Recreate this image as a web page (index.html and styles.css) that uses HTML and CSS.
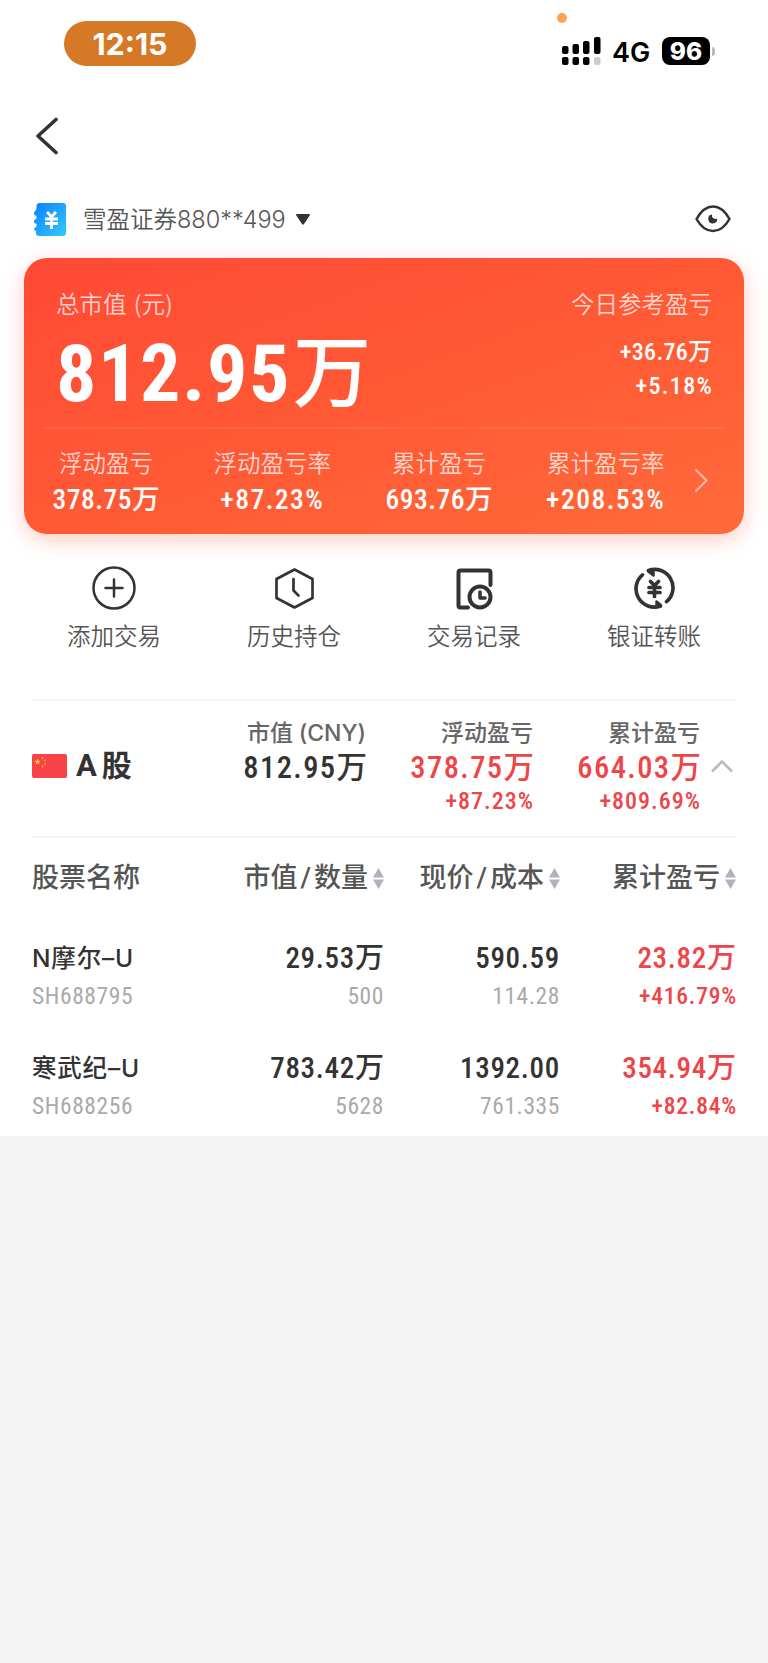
FILE: index.html
```
<!DOCTYPE html>
<html lang="zh-CN">
<head>
    <meta charset="UTF-8">
    <meta name="viewport" content="width=device-width, initial-scale=1.0">
    <title>持仓盈亏</title>
    <link rel="stylesheet" href="styles.css">
</head>
<body>
    <main class="page">
        <header class="status-bar">
            <span class="clock">12:15</span>
            <div class="status-right">
                <span class="mic-dot"></span>
                <svg class="signal" width="39" height="28" viewBox="0 0 39 28">
                    <rect x="0" y="9" width="6.5" height="8" rx="2"/>
                    <rect x="10.5" y="7" width="6.5" height="10" rx="2"/>
                    <rect x="21" y="4" width="6.5" height="13" rx="2"/>
                    <rect x="32" y="0" width="6.5" height="17" rx="2"/>
                    <rect x="0" y="20" width="6.5" height="8" rx="2"/>
                    <rect x="10.5" y="20" width="6.5" height="8" rx="2"/>
                    <rect x="21" y="20" width="6.5" height="8" rx="2"/>
                    <rect x="32" y="20" width="6.5" height="8" rx="2" fill="#ccc"/>
                </svg>
                <span class="network">4G</span>
                <span class="battery">96</span>
                <span class="battery-tip"></span>
            </div>
        </header>

        <nav class="nav-bar">
            <svg width="24" height="38" viewBox="0 0 24 38" fill="none" stroke="#333" stroke-width="3.6" stroke-linecap="round" stroke-linejoin="round">
                <path d="M21 2.5 3 19l18 16.5"/>
            </svg>
        </nav>

        <section class="account">
            <svg class="account-icon" width="32" height="33" viewBox="0 0 32 33">
                <defs>
                    <linearGradient id="blue" x1="0" y1="0" x2="1" y2="1">
                        <stop offset="0" stop-color="#0a80ff"/>
                        <stop offset="1" stop-color="#35c8ff"/>
                    </linearGradient>
                </defs>
                <path fill="url(#blue)" d="M5 0h24a3 3 0 0 1 3 3v27a3 3 0 0 1-3 3H5a3 3 0 0 1-3-3v-2a2 2 0 0 1-1.500-3l2-1.500v-2.500l-2-1a2 2 0 0 1 0-3l2-1.500v-2.500l-2-1a2 2 0 0 1 0-3L2.500 6V3A3 3 0 0 1 5 0z"/>
                <path fill="none" stroke="#fff" stroke-width="2.800" stroke-linecap="square" d="m14 10 3.500 4L21 10M17.500 14v10.500M12.500 16h10M12.500 20.500h10"/>
            </svg>
            <span class="account-name">雪盈证券880**499</span>
            <svg class="account-arrow" width="14" height="11" viewBox="0 0 14 11"><path fill="#333" d="M1 0h12q1.500.3.500 1.800L8 10q-1 1.300-2 0L.5 1.800Q-.5.3 1 0z"/></svg>
            <svg class="eye" width="36" height="28" viewBox="0 0 36 28">
                <path fill="none" stroke="#333" stroke-width="2.500" stroke-linejoin="round" d="M1.500 14C6 6 11 1.500 18 1.500S30 6 34.500 14C30 22 25 26 18 26S6 22 1.500 14z"/>
                <path fill="#333" d="M17 9.500q-.8 4.500 5.300 4.500a4.500 4.500 0 1 1-5.300-4.500z"/>
            </svg>
        </section>

        <section class="card">
            <div class="card-top">
                <div>
                    <div class="card-label">总市值 (元)</div>
                    <div class="total">812.95<span class="wan">万</span></div>
                </div>
                <div class="today">
                    <div class="card-label">今日参考盈亏</div>
                    <div class="today-value">+36.76<span class="wan">万</span></div>
                    <div class="today-value percent">+5.18%</div>
                </div>
            </div>
            <div class="card-bottom">
                <div class="stat">
                    <div class="card-label">浮动盈亏</div>
                    <div class="stat-value">378.75<span class="wan">万</span></div>
                </div>
                <div class="stat">
                    <div class="card-label">浮动盈亏率</div>
                    <div class="stat-value percent">+87.23%</div>
                </div>
                <div class="stat">
                    <div class="card-label">累计盈亏</div>
                    <div class="stat-value">693.76<span class="wan">万</span></div>
                </div>
                <div class="stat">
                    <div class="card-label">累计盈亏率</div>
                    <div class="stat-value percent">+208.53%</div>
                </div>
                <svg class="card-more" width="15" height="25" viewBox="0 0 15 25" fill="none" stroke="#ffb49f" stroke-width="2.400" stroke-linejoin="round">
                    <path d="m1.500 1.500 11 11-11 11"/>
                </svg>
            </div>
        </section>

        <section class="actions">
            <div class="action">
                <svg width="44" height="44" viewBox="0 0 44 44" fill="none" stroke="#333" stroke-width="2.500" stroke-linecap="round">
                    <circle cx="22" cy="22" r="20.500"/>
                    <path d="M22 13.500v17M13.500 22h17"/>
                </svg>
                <span>添加交易</span>
            </div>
            <div class="action">
                <svg width="44" height="44" viewBox="0 0 44 44" fill="none" stroke="#333" stroke-width="2.700" stroke-linecap="round" stroke-linejoin="round">
                    <path d="m22.500 3.500 18 9.500v19l-18 9.500-18-9.500V13z"/>
                    <path d="M21.500 13v11.500l5 5"/>
                </svg>
                <span>历史持仓</span>
            </div>
            <div class="action">
                <svg width="44" height="44" viewBox="0 0 44 44" fill="none" stroke="#333" stroke-width="4" stroke-linecap="round" stroke-linejoin="round">
                    <path d="M38.500 19V6.500a2 2 0 0 0-2-2h-28a2 2 0 0 0-2 2v33a2 2 0 0 0 2 2H16"/>
                    <circle cx="28" cy="31" r="10.500"/>
                    <path stroke-width="3.500" d="M28 26v6h5"/>
                </svg>
                <span>交易记录</span>
            </div>
            <div class="action">
                <svg width="44" height="44" viewBox="0 0 44 44" fill="none" stroke="#333" stroke-width="3.600" stroke-linecap="round" stroke-linejoin="round">
                    <path d="M10.500 8.800A18.300 18.300 0 0 0 28.500 40M34.500 35.700A18.300 18.300 0 0 0 16.500 4.500"/>
                    <path fill="#333" stroke-width="2.500" d="M16 5.200 21.500 9.500V6zM29 39.300 24.500 35.500v3.500z"/>
                    <path stroke-width="3.700" d="m18.500 15.500 4 4 4-4M22.500 20v10.500M17 21.500h11M17 26.500h11"/>
                </svg>
                <span>银证转账</span>
            </div>
        </section>

        <section class="market">
            <div class="market-name">
                <svg width="35" height="24" viewBox="0 0 35 24">
                    <rect width="35" height="24" rx="2" fill="#f94248"/>
                    <path fill="#ffde2e" d="m5.500 4.500.8 2.300h2.400l-1.900 1.400.7 2.300-2-1.400-2 1.400.7-2.300-1.900-1.400h2.400z"/>
                    <g fill="#ffb12e">
                        <circle cx="10.500" cy="4" r=".9"/>
                        <circle cx="13" cy="6.500" r=".9"/>
                        <circle cx="13" cy="10" r=".9"/>
                        <circle cx="10.500" cy="12.500" r=".9"/>
                    </g>
                </svg>
                <strong>A<span>股</span></strong>
            </div>
            <div class="market-col">
                <div class="market-label">市值 <span class="currency">(CNY)</span></div>
                <div class="market-value">812.95<span class="wan">万</span></div>
            </div>
            <div class="market-col">
                <div class="market-label">浮动盈亏</div>
                <div class="market-value up">378.75<span class="wan">万</span></div>
                <div class="market-rate up">+87.23%</div>
            </div>
            <div class="market-col">
                <div class="market-label">累计盈亏</div>
                <div class="market-value up">664.03<span class="wan">万</span></div>
                <div class="market-rate up">+809.69%</div>
            </div>
            <svg class="collapse" width="22" height="14" viewBox="0 0 22 14" fill="none" stroke="#bbb" stroke-width="2.600">
                <path d="m1 12.500 10-10 10 10"/>
            </svg>
        </section>

        <section class="stocks">
            <div class="stock-row stock-head">
                <div>股票名称</div>
                <div>市值<i>/</i>数量<svg class="sort" width="11" height="21" viewBox="0 0 11 21"><path d="M5.500 0 11 9.500H0zM0 11.500h11L5.500 21z"/></svg></div>
                <div>现价<i>/</i>成本<svg class="sort" width="11" height="21" viewBox="0 0 11 21"><path d="M5.500 0 11 9.500H0zM0 11.500h11L5.500 21z"/></svg></div>
                <div>累计盈亏<svg class="sort" width="11" height="21" viewBox="0 0 11 21"><path d="M5.500 0 11 9.500H0zM0 11.500h11L5.500 21z"/></svg></div>
            </div>
            <div class="stock-row">
                <div>
                    <div class="stock-name">N摩尔–U</div>
                    <div class="sub">SH688795</div>
                </div>
                <div>
                    <div class="value">29.53<span class="wan">万</span></div>
                    <div class="sub">500</div>
                </div>
                <div>
                    <div class="value">590.59</div>
                    <div class="sub">114.28</div>
                </div>
                <div class="up">
                    <div class="value">23.82<span class="wan">万</span></div>
                    <div class="sub rate">+416.79%</div>
                </div>
            </div>
            <div class="stock-row">
                <div>
                    <div class="stock-name">寒武纪–U</div>
                    <div class="sub">SH688256</div>
                </div>
                <div>
                    <div class="value">783.42<span class="wan">万</span></div>
                    <div class="sub">5628</div>
                </div>
                <div>
                    <div class="value">1392.00</div>
                    <div class="sub">761.335</div>
                </div>
                <div class="up">
                    <div class="value">354.94<span class="wan">万</span></div>
                    <div class="sub rate">+82.84%</div>
                </div>
            </div>
        </section>
    </main>
</body>
</html>
```
FILE: styles.css
```
* {
    box-sizing: border-box;
}
body {
    margin: 0;
    min-height: 1663px;
    background-color: #f4f4f4;
    color: #333;
    font-family: Roboto, "Noto Sans CJK SC", sans-serif;
}
svg {
    display: block;
    flex: none;
}
.page {
    height: 1136px;
    background-color: #fff;
    overflow: hidden;
}
.wan {
    font-family: "Noto Sans CJK SC", sans-serif;
    letter-spacing: 0;
    line-height: 1px;
}
.up {
    color: #ee4548;
}
.total, .today-value, .stat-value, .market-value, .market-rate, .value, .sub {
    font-stretch: 85%;
}

/* status bar */
.status-bar {
    display: flex;
    justify-content: space-between;
    height: 100px;
    padding: 21px 53px 0 64px;
    font-family: Inter, sans-serif;
}
.clock {
    width: 132px;
    height: 45px;
    border-radius: 23px;
    background-color: #d67926;
    color: #fff;
    font-size: 30.5px;
    font-weight: 650;
    line-height: 46px;
    text-align: center;
}
.status-right {
    position: relative;
    display: flex;
    align-items: center;
    height: 28px;
    margin-top: 16px;
}
.mic-dot {
    position: absolute;
    top: -24px;
    left: -5px;
    width: 10px;
    height: 10px;
    border-radius: 50%;
    background-color: #ffa352;
}
.network {
    width: 38px;
    margin: 3px 12px 0 11px;
    color: #000;
    font-size: 27px;
    font-weight: 600;
    line-height: 28px;
}
.battery {
    width: 48px;
    height: 28px;
    border-radius: 8px;
    background-color: #000;
    color: #fff;
    font-size: 24.5px;
    font-weight: 800;
    line-height: 28px;
    text-align: center;
}
.battery-tip {
    width: 3px;
    height: 9px;
    margin-left: 2px;
    border-radius: 0 4px 4px 0;
    background-color: #bbb;
}

/* back and account */
.nav-bar {
    height: 102px;
    padding: 17px 35px;
}
.account {
    display: flex;
    align-items: center;
    height: 34px;
    padding: 1px 37px 0 34px;
}
.account-name {
    margin-left: 17px;
    color: #555;
    font-family: Inter, "Noto Sans CJK SC", sans-serif;
    font-size: 23.5px;
    font-weight: 350;
    line-height: 33px;
}
.account-arrow {
    margin-left: 10px;
}
.eye {
    margin: 0 0 2px auto;
}

/* summary card */
.card {
    height: 276px;
    margin: 22px 24px 0;
    padding: 29px 19px 0;
    border-radius: 23px;
    background: linear-gradient(160deg, #ff4a35, #ff5935 50%, #ff6a3a);
    box-shadow: 0 6px 20px rgba(255, 90, 60, 0.3);
    color: #fff;
}
.card-top {
    display: flex;
    justify-content: space-between;
    height: 142px;
    padding: 0 13px;
    border-bottom: 2px solid rgba(255, 255, 255, 0.08);
}
.card-label {
    color: rgba(255, 255, 255, 0.75);
    font-family: "Noto Sans CJK SC", sans-serif;
    font-size: 23.5px;
    font-weight: 350;
    line-height: 32px;
    word-spacing: 2px;
}
.total {
    font-size: 80px;
    font-weight: 700;
    letter-spacing: 1.6px;
    line-height: 111px;
}
.total .wan {
    font-size: 78px;
    font-weight: 500;
    margin-left: 2px;
}
.today {
    text-align: right;
}
.today-value {
    font-size: 24px;
    font-weight: 500;
    letter-spacing: 0.3px;
    line-height: 34px;
}
.today-value.percent {
    margin-right: -1px;
    letter-spacing: 1.3px;
}
.today .card-label {
    margin-bottom: 16px;
}
.card-bottom {
    display: flex;
    align-items: flex-start;
    padding-top: 17px;
}
.stat {
    width: 166.7px;
    text-align: center;
}
.stat:first-child {
    width: 126px;
}
.stat:nth-child(2) {
    margin-left: 20px;
}
.stat-value {
    font-size: 27.5px;
    font-weight: 500;
    letter-spacing: 0.5px;
    line-height: 43px;
}
.stat-value.percent {
    letter-spacing: 1.5px;
}
.card-more {
    margin: 22px 0 0 5px;
}

/* shortcuts */
.actions {
    display: flex;
    margin: 32px 24px 0;
    height: 133px;
}
.action {
    width: 180px;
    text-align: center;
}
.action svg {
    margin: 0 auto 11px;
}
.action span {
    color: #555;
    font-size: 23.5px;
    font-weight: 350;
    line-height: 32px;
}

/* market summary */
.market {
    display: flex;
    height: 139px;
    margin: 0 32px;
    padding-top: 17px;
    border-top: 2px solid #f5f5f5;
    border-bottom: 2px solid #f5f5f5;
}
.market-name {
    display: flex;
    align-items: center;
    width: 167px;
    height: 95px;
    gap: 9px;
}
.market-name strong {
    font-size: 31px;
    font-weight: 700;
    line-height: 36px;
}
.market-name strong span {
    margin-left: 5px;
    font-size: 30px;
    line-height: 1px;
}
.market-col {
    width: 167px;
    text-align: right;
}
.market-label {
    height: 32px;
    color: #666;
    font-size: 23px;
    font-weight: 500;
    line-height: 31px;
}
.currency {
    font-family: Inter, sans-serif;
    line-height: 1px;
}
.market-value {
    margin-right: -1px;
    font-size: 30.5px;
    font-weight: 500;
    letter-spacing: 1.4px;
    line-height: 35px;
}
.market-rate {
    margin-right: -1px;
    font-size: 24px;
    font-weight: 500;
    letter-spacing: 1px;
    line-height: 32px;
}
.collapse {
    margin: 41px 0 0 11px;
}

/* holdings */
.stocks {
    padding: 0 32px;
}
.stock-row {
    display: grid;
    grid-template-columns: 176px 176px 176px 176px;
    height: 110px;
    text-align: right;
}
.stock-row > :first-child {
    text-align: left;
}
.stock-head {
    align-items: start;
    height: 98px;
    padding-top: 20px;
    color: #555;
    font-size: 27px;
    font-weight: 500;
    line-height: 40px;
}
.stock-head div {
    display: flex;
    justify-content: flex-end;
    align-items: center;
}
.stock-head > :first-child {
    justify-content: flex-start;
}
.stock-head i {
    margin: 0 3px;
    font-style: normal;
}
.sort {
    margin-left: 5px;
    fill: #b1b1bf;
}
.stock-name {
    font-family: Inter, "Noto Sans CJK SC", sans-serif;
    font-size: 24.5px;
    font-weight: 500;
    letter-spacing: 0.8px;
    line-height: 44px;
}
.value {
    font-size: 29px;
    font-weight: 500;
    letter-spacing: 0.7px;
    line-height: 44px;
}
.sub {
    color: #aaa;
    font-size: 23.5px;
    font-weight: 400;
    letter-spacing: 0.6px;
    line-height: 32px;
}
.rate {
    margin-right: -1px;
    color: #ee4548;
    font-weight: 500;
    letter-spacing: 0.8px;
}
```
